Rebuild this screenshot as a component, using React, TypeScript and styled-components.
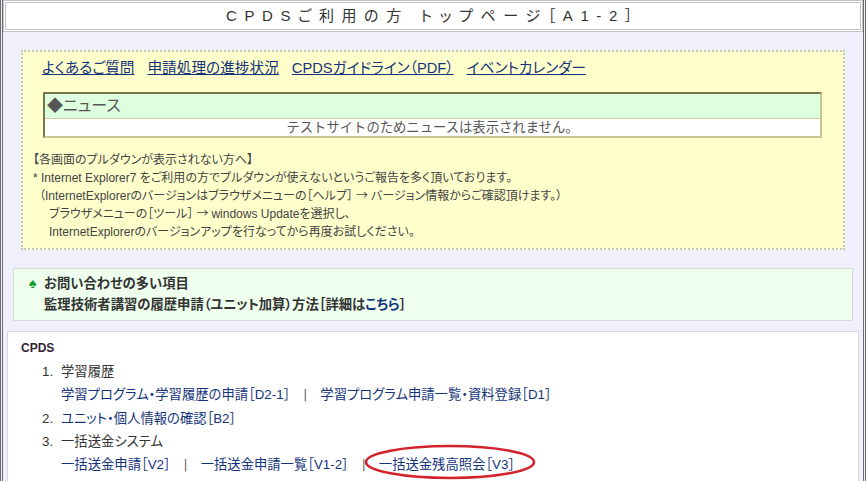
import React from 'react';
import styled, { createGlobalStyle } from 'styled-components';

const GlobalStyle = createGlobalStyle`
  html, body {
    margin: 0;
    padding: 0;
    background: #f0f0fc;
  }
  body {
    font-family: "Liberation Sans", "Noto Sans CJK JP", sans-serif;
    font-feature-settings: "palt";
    color: #333;
  }
`;

const Frame = styled.div`
  min-height: 481px;
  box-sizing: border-box;
  border-left: 3px double #6c6c6c;
  border-right: 3px double #6c6c6c;
  background: #f0f0fc;
  overflow: hidden;
`;

const Header = styled.h1`
  margin: 0;
  height: 26px;
  border: 3px double #c4c4c4;
  background: #fff;
  text-align: center;
  font-size: 15px;
  font-weight: normal;
  line-height: 26px;
  letter-spacing: 7.6px;
  color: #333;
`;

const Notice = styled.div`
  margin: 18px 18px 0 18px;
  padding: 8px 10px 7px 10px;
  border: 2px dotted #c6c6c0;
  background: #ffffcc;
`;

const QuickLinks = styled.div`
  display: flex;
  gap: 13px;
  padding-left: 9px;
  line-height: 16px;
  font-size: 14.67px;
`;

const Link = styled.a<{ $underline?: boolean }>`
  color: #13337a;
  text-decoration: ${(p) => (p.$underline ? 'underline' : 'none')};
  cursor: pointer;
`;

const NewsTable = styled.div`
  margin: 16px 11px 0 10px;
  border: 2px solid;
  border-color: #767650 #c6c698 #c6c698 #767650;
`;

const NewsHead = styled.div`
  height: 24px;
  line-height: 24px;
  padding-left: 2px;
  background: #ddffdd;
  border-bottom: 1px solid #c9c9a6;
  font-size: 16px;
  color: #555;
`;

const NewsBody = styled.div`
  height: 17px;
  line-height: 17px;
  background: #fff;
  text-align: center;
  font-size: 13.33px;
  font-feature-settings: normal;
  color: #555;
`;

const NoticeText = styled.div`
  margin-top: 13px;
  font-size: 12px;
  line-height: 18px;
  color: #444;
`;

const NoticeLine = styled.div<{ $indent?: number }>`
  height: 18px;
  padding-left: ${(p) => p.$indent ?? 0}px;
  white-space: nowrap;
`;

const Arrow = styled.span`
  font-family: "Noto Sans CJK JP", sans-serif;
  line-height: 1;
  margin: 0 3px;
`;

const Faq = styled.div`
  margin: 18px 10px 0 10px;
  padding: 4px 14px 5px 0;
  border: 1px solid #d8d8d8;
  background: #eeffee;
  font-size: 13.33px;
  font-weight: bold;
  line-height: 21px;
  color: #333;
`;

const FaqTitle = styled.div`
  display: flex;
  align-items: center;
`;

const Spade = styled.span`
  width: 30px;
  color: #119a22;
  font-size: 14px;
  padding-left: 15px;
  box-sizing: border-box;
`;

const FaqLine = styled.div`
  padding-left: 30px;
`;

const Menu = styled.div`
  margin: 10px 4px 0 4px;
  padding: 5px 13px 0 13px;
  border: 1px solid #d8d8de;
  border-bottom: none;
  background: #fff;
  font-size: 13.33px;
  line-height: 23px;
  min-height: 160px;
`;

const MenuTitle = styled.div`
  font-size: 12px;
  font-weight: bold;
  color: #332233;
`;

const Item = styled.div`
  display: flex;
  padding-left: 21px;
  color: #333;
`;

const Num = styled.span`
  width: 19px;
`;

const SubRow = styled.div`
  padding-left: 40px;
  white-space: nowrap;
`;

const Sep = styled.span`
  margin: 0 13px;
  color: #555;
  font-family: "DejaVu Sans", sans-serif;
  font-size: 12px;
`;

const Marked = styled.span`
  position: relative;
  display: inline-block;
`;

const Ring = styled.svg`
  position: absolute;
  left: -15px;
  top: -9px;
  width: 172px;
  height: 36px;
  overflow: visible;
  pointer-events: none;
`;

export default function App() {
  return (
    <>
      <GlobalStyle />
      <Frame>
        <Header>CPDSご利用の方 トップページ［A1-2］</Header>
        <Notice>
          <QuickLinks>
            <Link $underline>よくあるご質問</Link>
            <Link $underline>申請処理の進捗状況</Link>
            <Link $underline>CPDSガイドライン（PDF）</Link>
            <Link $underline>イベントカレンダー</Link>
          </QuickLinks>
          <NewsTable>
            <NewsHead>◆ニュース</NewsHead>
            <NewsBody>テストサイトのためニュースは表示されません。</NewsBody>
          </NewsTable>
          <NoticeText>
            <NoticeLine>【各画面のプルダウンが表示されない方へ】</NoticeLine>
            <NoticeLine>* Internet Explorer7 をご利用の方でプルダウンが使えないというご報告を多く頂いております。</NoticeLine>
            <NoticeLine $indent={6}>
              （InternetExplorerのバージョンはブラウザメニューの［ヘルプ］<Arrow>→</Arrow>バージョン情報からご確認頂けます。）
            </NoticeLine>
            <NoticeLine $indent={16}>
              ブラウザメニューの［ツール］<Arrow>→</Arrow>windows Updateを選択し、
            </NoticeLine>
            <NoticeLine $indent={16}>InternetExplorerのバージョンアップを行なってから再度お試しください。</NoticeLine>
          </NoticeText>
        </Notice>
        <Faq>
          <FaqTitle>
            <Spade>♠</Spade>
            <span>お問い合わせの多い項目</span>
          </FaqTitle>
          <FaqLine>
            監理技術者講習の履歴申請（ユニット加算）方法［詳細は<Link>こちら</Link>］
          </FaqLine>
        </Faq>
        <Menu>
          <MenuTitle>CPDS</MenuTitle>
          <Item>
            <Num>1.</Num>
            <span>学習履歴</span>
          </Item>
          <SubRow>
            <Link>学習プログラム・学習履歴の申請［D2-1］</Link>
            <Sep>|</Sep>
            <Link>学習プログラム申請一覧・資料登録［D1］</Link>
          </SubRow>
          <Item>
            <Num>2.</Num>
            <Link>ユニット・個人情報の確認［B2］</Link>
          </Item>
          <Item>
            <Num>3.</Num>
            <span>一括送金システム</span>
          </Item>
          <SubRow>
            <Link>一括送金申請［V2］</Link>
            <Sep>|</Sep>
            <Link>一括送金申請一覧［V1-2］</Link>
            <Sep>|</Sep>
            <Marked>
              <Link>一括送金残高照会［V3］</Link>
              <Ring viewBox="0 0 172 36">
                <ellipse cx="86" cy="18" rx="84" ry="16" fill="none" stroke="#d2222a" strokeWidth="2.6" />
              </Ring>
            </Marked>
          </SubRow>
        </Menu>
      </Frame>
    </>
  );
}
